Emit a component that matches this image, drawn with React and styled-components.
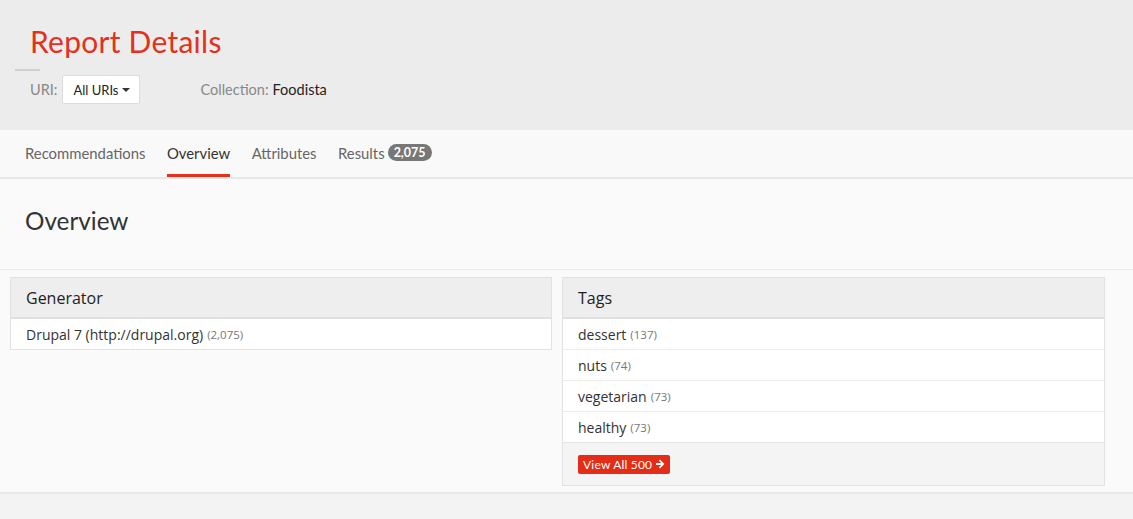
import React from "react";
import styled, { createGlobalStyle } from "styled-components";

const Global = createGlobalStyle`
  html, body { margin: 0; padding: 0; }
  body {
    background: #f3f3f3;
    font-family: "Open Sans", "Liberation Sans", sans-serif;
    color: #333;
  }
`;

const Page = styled.div`
  width: 1133px;
  min-height: 519px;
  background: #f3f3f3;
`;

const Header = styled.header`
  background: #ececec;
  height: 130px;
  box-sizing: border-box;
  padding: 23px 0 0 0;
`;

const Title = styled.h1`
  margin: 0 0 0 30px;
  font-family: Lato, "Liberation Sans", sans-serif;
  font-weight: 400;
  font-size: 30px;
  line-height: 37px;
  color: #e5301c;
  letter-spacing: 0.25px;
`;

const Rule = styled.div`
  width: 25px;
  height: 2px;
  background: #cfcfcf;
  margin: 9px 0 0 15px;
`;

const MetaRow = styled.div`
  display: flex;
  align-items: center;
  margin: 4px 0 0 30px;
  font-family: Lato, "Liberation Sans", sans-serif;
  font-size: 14.5px;
`;

const Label = styled.span`
  color: #888;
  margin-right: ${(p) => p.$gap || 5}px;
`;

const Value = styled.span`
  color: #222;
`;

const Dropdown = styled.button`
  display: flex;
  align-items: center;
  gap: 4px;
  height: 29px;
  box-sizing: border-box;
  padding: 0 9px 0 10px;
  background: #fff;
  border: 1px solid #dcdcdc;
  border-radius: 2px;
  font-family: Lato, "Liberation Sans", sans-serif;
  font-size: 13px;
  color: #222;
  margin-right: 60px;
`;

const Caret = styled.span`
  width: 0;
  height: 0;
  border-left: 4px solid transparent;
  border-right: 4px solid transparent;
  border-top: 4px solid #333;
  margin-top: 1px;
`;

const TabBar = styled.nav`
  background: #f9f9f9;
  height: 47px;
  display: flex;
  padding-left: 25px;
  gap: 21.5px;
  border-bottom: 2px solid #e8e8e8;
`;

const Tab = styled.div`
  display: flex;
  align-items: center;
  gap: 3px;
  height: 100%;
  box-sizing: border-box;
  padding-top: 1px;
  font-family: Lato, "Liberation Sans", sans-serif;
  font-size: 14.85px;
  color: ${(p) => (p.$active ? "#333" : "#666")};
  border-bottom: 3px solid ${(p) => (p.$active ? "#e5301c" : "transparent")};
`;

const Badge = styled.span`
  background: #777;
  color: #fff;
  font-family: Lato, "Liberation Sans", sans-serif;
  font-weight: 700;
  font-size: 12.5px;
  line-height: 17px;
  padding: 0 6px;
  border-radius: 9px;
`;

const Content = styled.main`
  background: #fafafa;
  border-bottom: 2px solid #e8e8e8;
  padding-bottom: 6px;
`;

const SectionHead = styled.div`
  height: 91px;
  display: flex;
  align-items: center;
  padding: 0 0 7px 25px;
  border-bottom: 1px solid #ebebeb;
  box-sizing: border-box;
`;

const SectionTitle = styled.h2`
  margin: 0;
  font-family: Lato, "Liberation Sans", sans-serif;
  font-weight: 400;
  font-size: 24.3px;
  color: #333;
`;

const Grid = styled.div`
  display: grid;
  grid-template-columns: 542px 543px;
  column-gap: 10px;
  padding: 7px 0 0 10px;
  align-items: start;
`;

const Panel = styled.section`
  border: 1px solid #e2e2e2;
  background: #fff;
`;

const PanelHead = styled.div`
  background: #eeeeee;
  height: 39px;
  display: flex;
  align-items: center;
  padding-left: 15px;
  border-bottom: 2px solid #e0e0e0;
  font-size: 16px;
  color: #222;
`;

const Row = styled.div`
  height: 30px;
  display: flex;
  align-items: center;
  padding-left: 15px;
  font-size: 14px;
  color: #333;
  & + & {
    border-top: 1px solid #ececec;
  }
`;

const Count = styled.span`
  color: #777;
  font-size: 11.5px;
  margin-left: 4px;
`;

const Footer = styled.div`
  background: #f4f4f4;
  border-top: 1px solid #e6e6e6;
  height: 42px;
  display: flex;
  align-items: center;
  padding-left: 15px;
`;

const RedButton = styled.button`
  display: flex;
  align-items: center;
  gap: 3px;
  height: 19px;
  padding: 0 5px;
  border: none;
  border-radius: 2px;
  background: #e42d17;
  color: #fff;
  font-family: Lato, "Liberation Sans", sans-serif;
  font-size: 12px;
  letter-spacing: 0.2px;
`;

const Arrow = () => (
  <svg width="10" height="10" viewBox="0 0 10 10">
    <path d="M1 4h5L3.8 1.8 5 0.6 9.4 5 5 9.4 3.8 8.2 6 6H1z" fill="#fff" />
  </svg>
);

const tags = [
  ["dessert", "137"],
  ["nuts", "74"],
  ["vegetarian", "73"],
  ["healthy", "73"],
];

export default function App() {
  return (
    <Page>
      <Global />
      <Header>
        <Title>Report Details</Title>
        <Rule />
        <MetaRow>
          <Label>URI:</Label>
          <Dropdown>
            All URIs <Caret />
          </Dropdown>
          <Label $gap={4}>Collection:</Label>
          <Value>Foodista</Value>
        </MetaRow>
      </Header>
      <TabBar>
        <Tab>Recommendations</Tab>
        <Tab $active>Overview</Tab>
        <Tab>Attributes</Tab>
        <Tab>
          Results<Badge>2,075</Badge>
        </Tab>
      </TabBar>
      <Content>
        <SectionHead>
          <SectionTitle>Overview</SectionTitle>
        </SectionHead>
        <Grid>
          <Panel>
            <PanelHead>Generator</PanelHead>
            <Row>
              Drupal 7 (http://drupal.org)<Count>(2,075)</Count>
            </Row>
          </Panel>
          <Panel>
            <PanelHead>Tags</PanelHead>
            {tags.map(([t, c]) => (
              <Row key={t}>
                {t}
                <Count>({c})</Count>
              </Row>
            ))}
            <Footer>
              <RedButton>
                View All 500 <Arrow />
              </RedButton>
            </Footer>
          </Panel>
        </Grid>
      </Content>
    </Page>
  );
}
